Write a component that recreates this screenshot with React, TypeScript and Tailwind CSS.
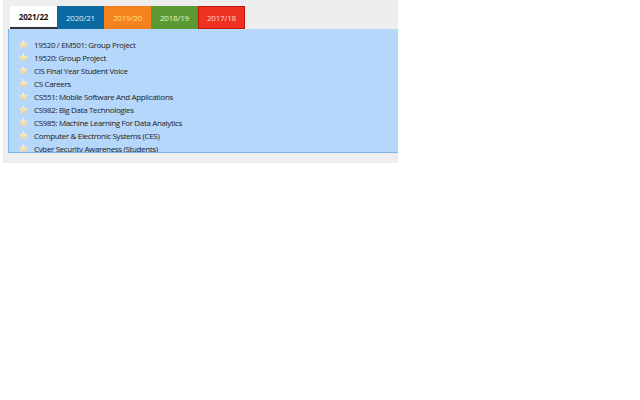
const tabs = [
  { label: '2021/22', cls: 'bg-white text-[#111] font-bold border-b-2 border-[#333]' },
  { label: '2020/21', cls: 'bg-[#0b6aa2] text-[#dbeeff]' },
  { label: '2019/20', cls: 'bg-[#f5821f] text-[#ffe07a]' },
  { label: '2018/19', cls: 'bg-[#5b9a32] text-[#e2f4c4]' },
  { label: '2017/18', cls: 'bg-[#ef3124] text-[#ffd6d0] border border-[#c0160c]' },
];

const modules = [
  '19520 / EM501: Group Project',
  '19520: Group Project',
  'CIS Final Year Student Voice',
  'CS Careers',
  'CS551: Mobile Software And Applications',
  'CS982: Big Data Technologies',
  'CS985: Machine Learning For Data Analytics',
  'Computer & Electronic Systems (CES)',
  'Cyber Security Awareness (Students)',
  'Department of Computer & Information Sciences',
];

function Star() {
  return (
    <svg width="11" height="11" viewBox="0 0 24 24" className="shrink-0">
      <defs>
        <linearGradient id="sg" x1="0" y1="0" x2="0" y2="1">
          <stop offset="0" stopColor="#fff8e0" />
          <stop offset="1" stopColor="#f3cf7a" />
        </linearGradient>
      </defs>
      <path
        d="M12 1.5l3.2 7 7.3.7-5.5 5 1.6 7.3L12 17.8l-6.6 3.7L7 14.2l-5.5-5 7.3-.7z"
        fill="url(#sg)"
      />
    </svg>
  );
}

export default function App() {
  return (
    <div className="w-[640px] h-[400px] bg-white font-['Open_Sans','Noto_Sans',sans-serif]">
      <div className="ml-[3px] w-[395px] h-[163px] bg-[#eeeeee] pt-[6px]">
        <div className="flex ml-[7px] h-[23px]">
          {tabs.map((t) => (
            <div
              key={t.label}
              className={`w-[47px] flex items-center justify-center text-[8px] tracking-[-0.2px] ${t.cls}`}
            >
              {t.label}
            </div>
          ))}
        </div>
        <div className="ml-[5px] w-[390px] h-[124px] bg-[#b5d7fc] border-l border-b border-[#7fb2e6] overflow-hidden pt-[9px] pl-[9px]">
          {modules.map((m) => (
            <div key={m} className="flex items-center gap-[5px] h-[13px] text-[8px] tracking-[-0.35px] text-[#222]">
              <Star />
              <span>{m}</span>
            </div>
          ))}
        </div>
      </div>
    </div>
  );
}
